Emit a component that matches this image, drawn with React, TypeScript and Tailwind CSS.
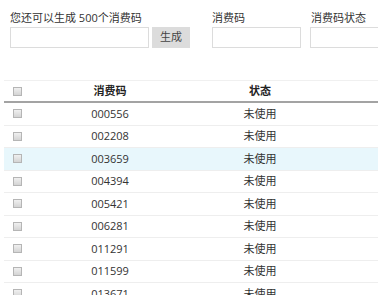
const codes = [
  "000556",
  "002208",
  "003659",
  "004394",
  "005421",
  "006281",
  "011291",
  "011599",
  "013671",
];

const Box = () => (
  <span className="block w-[9px] h-[9px] border border-[#b5b5b5] bg-gradient-to-b from-[#f0f0f0] to-[#d4d4d4]" />
);

export default function App() {
  return (
    <div className="w-[378px] h-[295px] overflow-hidden bg-white text-[11px] text-[#333] font-['Open_Sans','Noto_Sans_CJK_SC',sans-serif]">
      <div className="flex pt-[9px] pl-[10px]">
        <div className="flex flex-col w-[202px] shrink-0">
          <span className="h-[17px] leading-[17px]">您还可以生成 500个消费码</span>
          <div className="flex mt-[1px] gap-[3px]">
            <div className="w-[139px] h-[21px] border border-[#dcdcdc] bg-white shrink-0" />
            <button className="w-[38px] h-[21px] bg-[#dcdcdc] text-[#444] text-[11px] shrink-0">生成</button>
          </div>
        </div>
        <div className="flex flex-col w-[98px] shrink-0">
          <span className="h-[17px] leading-[17px]">消费码</span>
          <div className="mt-[1px] w-[89px] h-[21px] border border-[#dcdcdc] bg-white" />
        </div>
        <div className="flex flex-col w-[100px] shrink-0">
          <span className="h-[17px] leading-[17px] pl-[1px]">消费码状态</span>
          <div className="mt-[1px] w-[100px] h-[21px] border border-[#dcdcdc] bg-white" />
        </div>
      </div>

      <div className="ml-[4px] mt-[32px] border-t border-[#f0f0f0]">
        <div className="flex items-center h-[22px] border-b-2 border-[#a3a3a3] font-bold text-[#222]">
          <div className="w-[26px] flex justify-center pl-[1px]">
            <Box />
          </div>
          <div className="w-[160px] text-center">消费码</div>
          <div className="w-[140px] text-center">状态</div>
        </div>
        {codes.map((code, i) => (
          <div
            key={code}
            className={`flex items-center h-[22.5px] border-b border-[#eeeeee] ${i === 2 ? "bg-[#e8f7fc]" : ""}`}
          >
            <div className="w-[26px] flex justify-center pl-[1px]">
              <Box />
            </div>
            <div className="w-[160px] text-center">{code}</div>
            <div className="w-[140px] text-center">未使用</div>
          </div>
        ))}
      </div>
    </div>
  );
}
